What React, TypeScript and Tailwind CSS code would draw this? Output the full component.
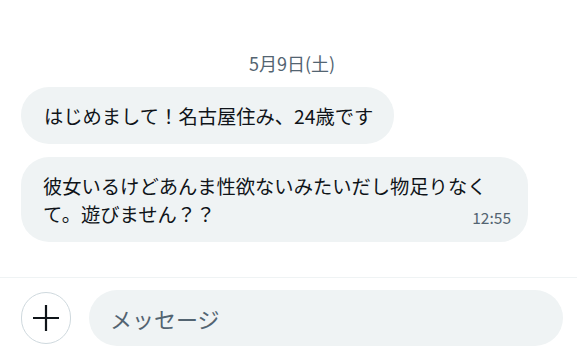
import React from "react";

export default function App() {
  const font = { fontFamily: '"Noto Sans CJK JP", "Noto Sans", sans-serif' };
  return (
    <div className="w-[577px] h-[364px] bg-white overflow-hidden flex flex-col" style={font}>
      <div className="h-[277px] pl-[21px] pr-[14px] pt-[51px] flex flex-col">
        <div className="text-center text-[18px] leading-[24px] text-[#536471]">5月9日(土)</div>
        <div className="mt-[12px] flex flex-col gap-[13px] items-start">
          <div className="h-[57px] flex items-center rounded-[28px] bg-[#eff3f4] pl-[23px] pr-[21px] text-[19.3px] leading-[28px] text-[#0f1419]">
            はじめまして！名古屋住み、24歳です
          </div>
          <div className="w-[507px] rounded-[28px] bg-[#eff3f4] pl-[22px] pr-[17px] pt-[15px] pb-[14px] flex flex-col">
            <div className="text-[19.3px] leading-[28px] text-[#0f1419] whitespace-nowrap">
              彼女いるけどあんま性欲ないみたいだし物足りなく
            </div>
            <div className="flex items-end justify-between">
              <span className="text-[19.3px] leading-[28px] text-[#0f1419]">て。遊びません？？</span>
              <span className="text-[15.5px] leading-[20px] text-[#536471] mb-[1px]">12:55</span>
            </div>
          </div>
        </div>
      </div>
      <div className="h-px bg-[#eff3f4]" />
      <div className="flex items-center gap-[18px] pl-[21px] pr-[14px] pt-[12px]">
        <button className="w-[50px] h-[52px] shrink-0 rounded-full border border-[#cfd9de] flex items-center justify-center">
          <svg width="28" height="28" viewBox="0 0 28 28">
            <path d="M14 1v26M1 14h26" stroke="#0f1419" strokeWidth="2.2" fill="none" />
          </svg>
        </button>
        <div className="flex-1 h-[56px] rounded-full bg-[#eff3f4] flex items-center pl-[21px] text-[22px] text-[#536471]">
          メッセージ
        </div>
      </div>
    </div>
  );
}
